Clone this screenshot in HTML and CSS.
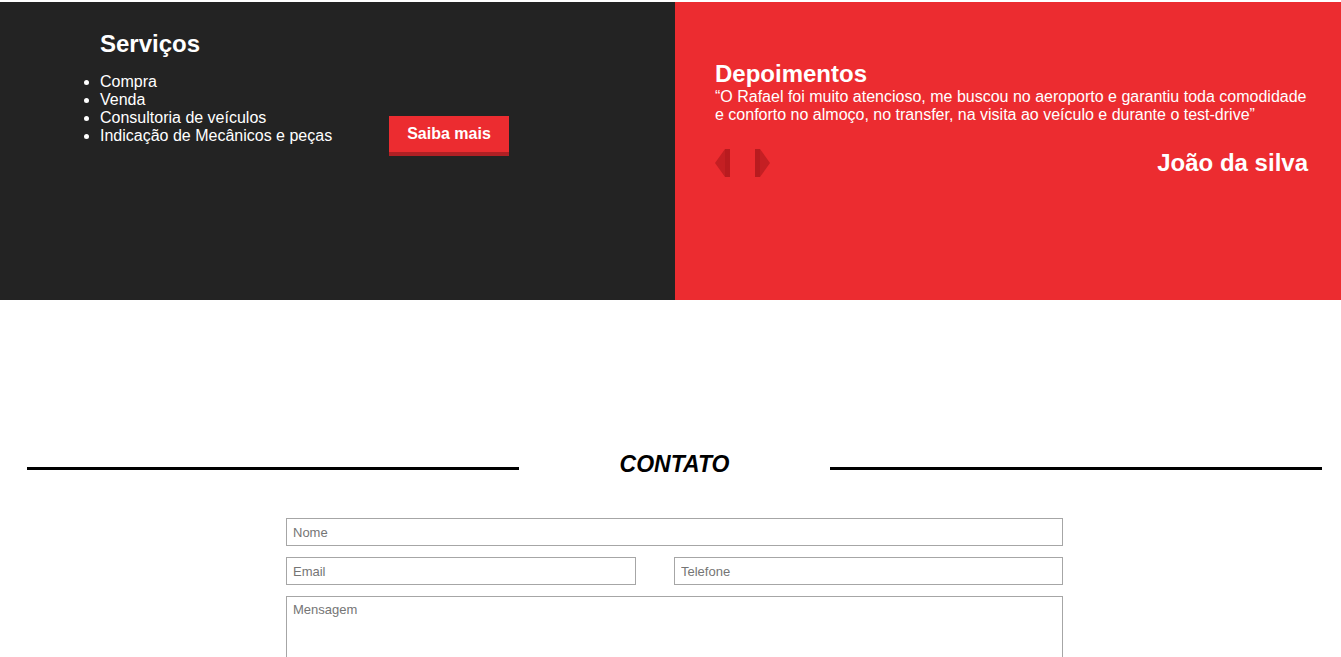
FILE: index.html
```html
<!DOCTYPE html>
<html lang="pt-BR">
<head>
<meta charset="utf-8">
<title>Serviços e Contato</title>
<link rel="stylesheet" href="styles.css">
</head>
<body>
<section class="top">
  <div class="servicos">
    <div class="servicos-col">
      <h2 class="title">Serviços</h2>
      <ul class="lista">
        <li>Compra</li>
        <li>Venda</li>
        <li>Consultoria de veículos</li>
        <li>Indicação de Mecânicos e peças</li>
      </ul>
    </div>
    <a class="btn" href="#">Saiba mais</a>
  </div>
  <div class="depoimentos">
    <h2 class="title">Depoimentos</h2>
    <p class="quote">“O Rafael foi muito atencioso, me buscou no aeroporto e garantiu toda comodidade e conforto no almoço, no transfer, na visita ao veículo e durante o test-drive”</p>
    <div class="dep-foot">
      <div class="arrows">
        <svg class="arrow" width="15" height="30" viewBox="0 0 15 30"><polygon points="0,15 10,1 10,29" fill="#c41f23"/><rect x="10" y="1" width="5" height="28" fill="#b81b1f"/></svg>
        <svg class="arrow" width="15" height="30" viewBox="0 0 15 30"><rect x="0" y="1" width="5" height="28" fill="#b81b1f"/><polygon points="5,1 15,15 5,29" fill="#c41f23"/></svg>
      </div>
      <h2 class="autor">João da silva</h2>
    </div>
  </div>
</section>

<section class="contato">
  <div class="contato-head">
    <span class="line"></span>
    <h2 class="contato-title">CONTATO</h2>
    <span class="line"></span>
  </div>
  <form class="form">
    <input class="field" type="text" placeholder="Nome">
    <div class="row">
      <input class="field email" type="email" placeholder="Email">
      <input class="field tel" type="text" placeholder="Telefone">
    </div>
    <textarea class="field msg" placeholder="Mensagem"></textarea>
  </form>
</section>
</body>
</html>
```
FILE: styles.css
```css
* { box-sizing: border-box; }
html, body { margin: 0; padding: 0; }
body {
  font-family: "Liberation Sans", Arial, sans-serif;
  background: #fff;
  color: #000;
}
.top {
  margin-top: 2px;
  display: flex;
  height: 298px;
}
.servicos {
  width: 675px;
  background: #232323;
  color: #fff;
  padding: 28px 0 0 100px;
  display: flex;
  align-items: flex-start;
}
.servicos-col { width: 289px; }
.title {
  margin: 0;
  font-size: 24px;
  font-weight: bold;
  line-height: 27.6px;
}
.lista {
  margin: 15px 0 0;
  padding-left: 0;
  list-style-position: outside;
  font-size: 16px;
  line-height: 18px;
}
.lista li { margin-left: 0; }
.btn {
  margin-top: 86px;
  display: block;
  width: 120px;
  height: 40px;
  padding-bottom: 4px;
  background: #ec2c30;
  box-shadow: inset 0 -4px 0 #b02024;
  color: #fff;
  font-weight: bold;
  font-size: 16px;
  line-height: 36px;
  text-align: center;
  text-decoration: none;
}
.depoimentos {
  flex: 1;
  background: #ec2c30;
  color: #fff;
  padding: 58px 33px 0 40px;
}
.quote {
  margin: 0;
  font-size: 16px;
  line-height: 18px;
}
.dep-foot {
  margin-top: 24px;
  display: flex;
  justify-content: space-between;
  align-items: center;
}
.arrows {
  display: flex;
  gap: 25px;
}
.arrow { display: block; }
.autor {
  margin: 0;
  font-size: 24px;
  line-height: 28px;
  font-weight: bold;
}
.contato { padding-top: 151px; }
.contato-head {
  margin-left: 27px;
  width: 1295px;
  display: flex;
  align-items: center;
}
.line {
  flex: 1;
  height: 3px;
  background: #000;
  margin-top: 8px;
}
.contato-title {
  width: 311px;
  margin: 0;
  text-align: center;
  font-size: 23px;
  line-height: 26px;
  font-style: italic;
  font-weight: bold;
}
.form {
  margin: 41px 0 0 286px;
  width: 777px;
  display: flex;
  flex-direction: column;
  gap: 11px;
}
.row {
  display: flex;
  justify-content: space-between;
}
.field {
  display: block;
  height: 28px;
  width: 100%;
  border: 1px solid #a6a6a6;
  padding: 0 6px;
  font-family: "Liberation Sans", Arial, sans-serif;
  font-size: 13px;
  color: #333;
  background: #fff;
  margin: 0;
  outline: none;
  border-radius: 0;
}
.field::placeholder { color: #757575; }
.email { width: 350px; }
.tel { width: 389px; }
.msg {
  height: 90px;
  padding: 5px 6px;
  resize: none;
}
```
